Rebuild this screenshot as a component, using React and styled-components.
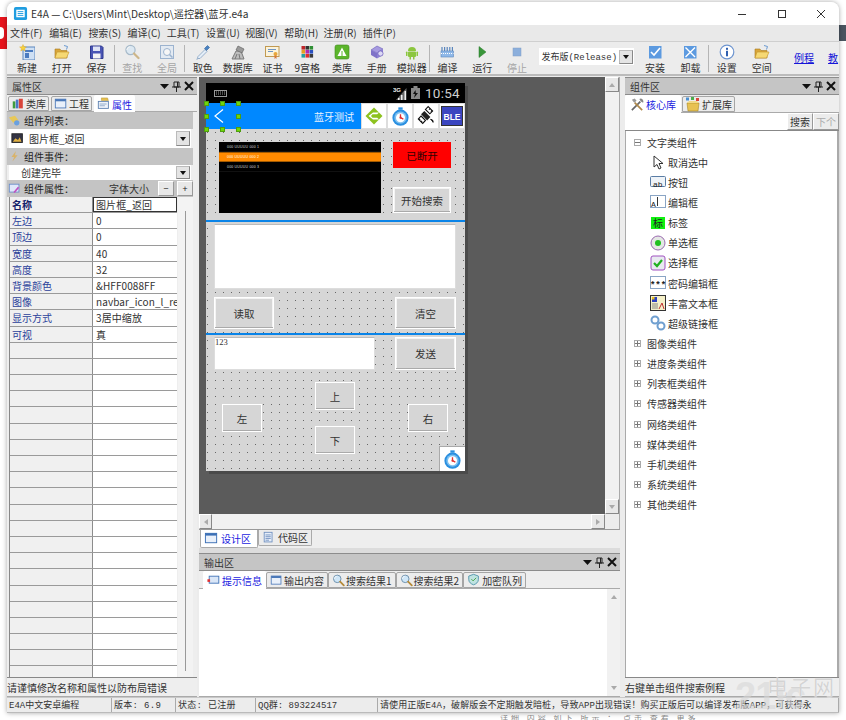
import React from "react";
import styled, { createGlobalStyle } from "styled-components";

const Global = createGlobalStyle`
  html, body { margin: 0; padding: 0; width: 846px; height: 720px; overflow: hidden; background: #fff; }
  * { box-sizing: border-box; }
  #root { font-family: "Noto Sans CJK SC", "Liberation Sans", sans-serif; font-size: 10px; color: #222; }
`;

const Page = styled.div`
  position: relative; width: 846px; height: 720px; padding: 2px 7px 7px 7px; background: #fff; overflow: hidden;
`;
const RedBlob = styled.div`
  position: absolute; left: 0; top: 17px; width: 7px; height: 32px; background: #e8141c;
  &::after { content: ""; position: absolute; left: 0; top: 10px; width: 4px; height: 12px; background: #fff; border-radius: 0 6px 6px 0; }
`;
const DarkEdge = styled.div`
  position: absolute; right: 0; top: 25px; width: 7px; height: 16px; background: #4a5560;
`;
const Win = styled.div`
  width: 832px; height: 711px; background: #f0f0f0; border-radius: 8px 8px 0 0; display: flex; flex-direction: column;
  box-shadow: 0 0 5px rgba(0,0,0,.35); overflow: hidden; position: relative;
`;
const TitleBar = styled.div`
  height: 23px; flex: none; background: #fff; display: flex; align-items: center; padding-left: 6px; gap: 3px;
  font-size: 10.2px; color: #333;
`;
const TitleText = styled.span` flex: 1; white-space: nowrap; `;
const WinBtns = styled.div` display: flex; color: #333; margin-right: -2px; `;
const WinBtn = styled.div` width: 39.5px; height: 23px; display: flex; align-items: center; justify-content: center; `;
const MenuBar = styled.div`
  height: 17px; flex: none; background: #e9e9e9; display: flex; align-items: center; padding: 0 0 2px 3px;
  border-bottom: 1px solid #cfcfcf;
`;
const MenuItem = styled.span` width: 39.2px; white-space: nowrap; font-size: 10px; color: #333; text-decoration: none; `;
const ToolBar = styled.div`
  height: 34px; flex: none; background: #ececec; display: flex; align-items: stretch; padding-left: 2.5px;
  border-bottom: 2px solid #bbb;
`;
const ToolBtn = styled.div`
  width: ${p => p.$w || 34.8}px; flex: none; display: flex; flex-direction: column; align-items: center; padding-top: 2px;
  font-size: 10px; line-height: 13px; white-space: nowrap; color: ${p => p.$off ? "#a5a5a5" : "#333"};
  & svg { display: block; margin-bottom: 1px; opacity: ${p => p.$off ? .55 : 1}; }
`;
const ToolSep = styled.div` width: 1px; flex: none; margin: 3px 0 2px; background: #b5b5b5; `;
const ComboBox = styled.div`
  width: 95px; height: 17px; margin: 6px 3px 0 5px; flex: none; background: #fff; display: flex; align-items: center; padding: 0 1px 0 2px;
  font-family: "Liberation Mono", "Noto Sans CJK SC", monospace; font-size: 9px; white-space: nowrap; color: #333;
`;
const ComboTxt = styled.span` flex: 1; overflow: hidden; `;
const ArrowBtn = styled.div`
  width: ${p => p.$w || 13}px; height: ${p => p.$h || 13}px; flex: none; background: #e4e4e4; border: 1px solid #bbb; border-right-color: #888; border-bottom-color: #888;
  display: flex; align-items: center; justify-content: center;
  &::after { content: ""; border-left: 3.5px solid transparent; border-right: 3.5px solid transparent; border-top: 4px solid #111; }
`;
const LinkBtn = styled.a`
  font-size: 10px; color: #1515d8; text-decoration: underline; white-space: nowrap; margin-top: 8px; margin-left: ${p => p.$ml || 0}px; width: ${p => p.$w}px; flex: none;
`;
const Workspace = styled.div` flex: 1; min-height: 0; display: flex; background: #ececec; padding-top: 1px; `;
const SidePanel = styled.div`
  width: ${p => p.$w}px; flex: none; display: flex; flex-direction: column; background: #eee;
`;
const PanelHead = styled.div`
  height: 18px; flex: none; background: #c5c5c5; border-top: 1px solid #8c8c8c; border-bottom: 1px solid #8c8c8c;
  display: flex; align-items: center; padding: 0 3px 0 5px; font-size: 10px; color: #333;
`;
const HeadTitle = styled.span` flex: 1; `;
const HeadGlyphs = styled.span` display: flex; align-items: center; gap: 3px; color: #111; `;
const TabRow = styled.div`
  height: ${p => p.$h || 18}px; flex: none; display: flex; align-items: flex-end; padding-left: ${p => p.$pad ?? 1}px; gap: ${p => p.$gap ?? 1}px; background: #eee;
  border-bottom: 1px solid #aaa;
`;
const Tab = styled.div`
  height: ${p => p.$active ? "calc(100% + 1px)" : "calc(100% - 1px)"}; display: flex; align-items: center; gap: 1px; padding: 0 ${p => p.$px ?? 2}px;
  white-space: nowrap; font-size: 10px; margin-bottom: ${p => p.$active ? "-1px" : "0"};
  color: ${p => p.$active ? "#1a1ae0" : "#333"}; background: ${p => p.$active ? "#fff" : "#ececec"};
  border: 1px solid #a5a5a5; border-bottom: ${p => p.$active ? "none" : "1px solid #a5a5a5"}; ${p => p.$active ? "border-color: transparent;" : ""}
  border-radius: 2px 2px 0 0;
`;
const SectionBar = styled.div`
  height: ${p => p.$h || 17}px; flex: none; margin-right: 4px; background: #c4c4c4; display: flex; align-items: center; gap: 2px; padding-left: 1px;
  font-size: 10px; color: #222; white-space: nowrap;
`;
const SectionTitle = styled.span` flex: 1; `;
const FontLabel = styled.span` margin-right: 6px; color: #333; `;
const MiniBtn = styled.div`
  width: 16px; height: 15px; background: #e8e8e8; border: 1px solid #fff; border-right-color: #999; border-bottom-color: #999;
  display: flex; align-items: center; justify-content: center; font-size: 9px; line-height: 1; margin-left: 1px;
`;
const SelectRow = styled.div`
  height: ${p => p.$h}px; flex: none; margin: ${p => p.$m || "0 6px 0 2px"}; background: #fff; display: flex; align-items: center; gap: 4px; padding: 0 1px 0 ${p => p.$pl || 2}px;
  font-size: 10px; color: #333;
`;
const SelTxt = styled.span` flex: 1; `;
const PropWrap = styled.div` flex: 1; min-height: 0; display: flex; padding-left: 2px; border-left: 0; background: #eee; overflow: hidden; `;
const PropTable = styled.div`
  width: 168px; flex: none; border-left: 1px solid #888; overflow: hidden;
`;
const PropRow = styled.div`
  height: 16.2px; display: flex; border-bottom: 1px solid #9a9a9a; border-top: 0;
`;
const PropName = styled.div`
  width: 83px; flex: none; background: #f0f0f0; border-right: 1px solid #8c8c8c; padding-left: 2px; line-height: 15px; font-size: 10px;
  color: ${p => p.$bold ? "#15206a" : "#2a3f9a"}; font-weight: ${p => p.$bold ? 700 : 400};
`;
const PropVal = styled.div`
  flex: 1; background: #fff; padding-left: 3px; line-height: 15px; font-size: 10px; color: #333; white-space: nowrap; overflow: hidden; letter-spacing: .1px;
  ${p => p.$edit ? "outline: 1px solid #333; outline-offset: -1px;" : ""}
`;
const PropScroll = styled.div`
  width: 15px; margin-left: 1px; flex: none; background: #f3f3f3; position: relative;
  &::after { content: ""; position: absolute; left: 7px; top: 14px; bottom: 6px; width: 1px; background: #999; }
`;
const Footer = styled.div`
  height: 20px; flex: none; background: #eee; border-top: 1px solid #888; border-bottom: 1px solid #aaa; padding-left: 0; line-height: 19px; font-size: 10px; color: #333; white-space: nowrap; overflow: hidden;
`;
const Center = styled.div` width: 421px; flex: none; margin: 0 5px 0 2px; display: flex; flex-direction: column; `;
const DesignBox = styled.div` height: 453px; flex: none; display: grid; grid-template-columns: 1fr 14px; grid-template-rows: 1fr 15px; border-bottom: 1px solid #999; border-right: 1px solid #aaa; `;
const DesignArea = styled.div` position: relative; background: #5b5b5b; overflow: hidden; `;
const VScroll = styled.div` background: #f1f1f1; display: flex; flex-direction: column; justify-content: space-between; `;
const HScroll = styled.div` background: #f1f1f1; display: flex; justify-content: space-between; `;
const Corner = styled.div` background: #ececec; `;
const ScrollBtn = styled.div`
  width: ${p => p.$w}px; height: ${p => p.$h}px; flex: none; background: #e8e8e8; border: 1px solid #fff; border-right-color: #888; border-bottom-color: #888;
  display: flex; align-items: center; justify-content: center;
  &::after { content: ""; ${p => ({
    up: "border-left:3px solid transparent;border-right:3px solid transparent;border-bottom:4px solid #aaa;",
    down: "border-left:3px solid transparent;border-right:3px solid transparent;border-top:4px solid #aaa;",
    left: "border-top:3px solid transparent;border-bottom:3px solid transparent;border-right:4px solid #aaa;",
    right: "border-top:3px solid transparent;border-bottom:3px solid transparent;border-left:4px solid #aaa;",
  })[p.$dir]} }
`;
const DocTabs = styled.div` height: 18px; flex: none; display: flex; align-items: flex-start; gap: 0; padding-left: 1px; background: #eee; `;
const DocTab = styled.div`
  height: ${p => p.$active ? 18 : 16}px; display: flex; align-items: center; gap: 2px; padding: 0 ${p => p.$active ? 6 : 3}px 0 3px; background: ${p => p.$active ? "#fff" : "#ececec"};
  color: ${p => p.$active ? "#1a1ae0" : "#333"}; border: 1px solid #aaa; border-top: 0; border-radius: 0 0 2px 2px; white-space: nowrap; font-size: 10px;
`;
const Gap = styled.div` height: 5px; flex: none; background: #dcdcdc; `;
const OutBody = styled.div` flex: 1; min-height: 0; background: #fff; display: flex; justify-content: flex-end; border-bottom: 1px solid #aaa; `;
const OutScroll = styled.div` width: 13px; background: #f1f1f1; display: flex; flex-direction: column; justify-content: space-between; padding: 6px 3px; align-items: center;
  &::before { content: ""; border-left:3px solid transparent;border-right:3px solid transparent;border-bottom:4px solid #aaa; }
  &::after { content: ""; border-left:3px solid transparent;border-right:3px solid transparent;border-top:4px solid #aaa; }
`;
const SearchRow = styled.div` height: 18px; flex: none; background: #fff; display: flex; justify-content: flex-end; border-bottom: 1px solid #888; `;
const SearchBtn = styled.div`
  width: ${p => p.$w}px; background: #ececec; border: 1px solid #fff; border-right-color: #999; border-bottom-color: #999; text-align: center; line-height: 15px; font-size: 10px;
  color: ${p => p.$off ? "#aaa" : "#333"};
`;
const Tree = styled.div` flex: 1; min-height: 0; background: #fff; padding-top: 1px; overflow: hidden; border-left: 1px solid #aaa; border-right: 2px solid #aaa; `;
const TreeRow = styled.div`
  height: 20.15px; display: flex; align-items: center; padding-left: ${p => p.$pl}px; gap: ${p => p.$gap}px; white-space: nowrap; font-size: 10px; color: #333;
`;
const Expander = styled.span`
  width: 7px; height: 7px; border: 1px solid #aaa; position: relative; flex: none; margin-right: 0;
  &::before { content: ""; position: absolute; left: 0; right: 0; top: 2px; height: 1px; background: #777; }
  ${p => p.$closed ? `&::after { content: ""; position: absolute; top: 0; bottom: 0; left: 2px; width: 1px; background: #777; }` : ""}
`;
const StatusBar = styled.div`
  height: 16px; flex: none; display: flex; background: #ececec; border-top: 1px solid #c8c8c8; border-bottom: 1px solid #bbb;
  font-family: "Liberation Mono", "Noto Sans CJK SC", monospace; font-size: 9px; color: #333; white-space: nowrap;
`;
const StatusCell = styled.div`
  width: ${p => p.$w}px; ${p => p.$grow ? "flex: 1; min-width: 0;" : "flex: none;"} overflow: hidden; padding-left: 2px; line-height: 16px; border-right: 1px solid #aaa; letter-spacing: ${p => p.$ls || 0};
`;
const Watermark = styled.div`
  position: absolute; left: 735px; top: 674px; width: 110px; height: 44px; pointer-events: none;
`;
const WmLogo = styled.span`
  position: absolute; left: 0; top: 2px; font-family: "Liberation Sans", sans-serif; font-weight: 700; font-size: 38px; line-height: 40px; color: rgba(215,215,215,.6); letter-spacing: -1px;
`;
const WmName = styled.span`
  position: absolute; left: 32px; top: 0; font-size: 21px; line-height: 24px; letter-spacing: 2px; color: rgba(205,205,205,.85); text-shadow: 0 0 1px rgba(255,255,255,.9);
`;
const BelowText = styled.div`
  position: absolute; left: 500px; bottom: 0; height: 5px; width: 340px; overflow: hidden; color: #888; font-size: 8px; line-height: 5px; letter-spacing: 3px; white-space: nowrap;
`;

/* phone in the designer: the free canvas of a form editor */
const Phone = styled.div`
  position: absolute; left: 7px; top: 6px; width: 259px; height: 388px; box-shadow: 3px 3px 0 #4a4a4a; background-color: #d6d6d6;
  background-image: radial-gradient(circle at 1.5px 1.5px, #666 .7px, transparent 1px); background-size: 8px 8px;
`;
const PhoneStatus = styled.div`
  height: 20px; background: #000; display: flex; align-items: center; padding: 0 5px 0 8px; color: #ddd; gap: 4px;
`;
const KeyPad = styled.span` flex: 1; display: flex; `;
const Clock = styled.span` font-family: Roboto, "Liberation Sans", sans-serif; font-size: 13.5px; letter-spacing: .3px; margin-left: 1px; color: #cfcfcf; `;
const NavBar = styled.div`
  height: 26px; background: #0088ff; display: flex; align-items: center; color: #fff; position: relative;
`;
const NavTitle = styled.span` margin: 0 7px 0 auto; font-size: 10px; color: #e8f3ff; `;
const NavIcon = styled.div`
  width: 26px; height: 26px; background: #fff; border: 1px solid #ddd; display: flex; align-items: center; justify-content: center;
`;
const Back = styled.span` margin-left: 7px; display: flex; `;
const Handle = styled.span`
  position: absolute; left: ${p => p.$l}px; top: ${p => p.$t}px; width: 5px; height: 5px; background: #6fd60a; border: 1px solid #4f9e10;
`;
const Ctl = styled.div`
  position: absolute; left: ${p => p.$x}px; top: ${p => p.$y}px; width: ${p => p.$w}px; height: ${p => p.$h}px;
`;
const CtlBtn = styled(Ctl)`
  background: #d6d6d6; border: 1px solid #fff; box-shadow: inset 0 -1px 0 #aaa, inset 0 0 0 ${p => p.$thick ? 1 : 0}px #f4f4f4; display: flex; align-items: center; justify-content: center; font-size: 10.5px; color: #333;
`;
const RedBox = styled(Ctl)` background: #ff0000; display: flex; align-items: center; justify-content: center; color: #300; font-size: 10.5px; `;
const WhiteBox = styled(Ctl)` background: #fff; border: 1px solid #ddd; border-top: 1px solid #bbb; font-family: "Liberation Serif", serif; font-size: 8.5px; line-height: 9px; color: #333; padding-left: 0; `;
const BlueLine = styled(Ctl)` background: #0a84e8; `;
const ListBox = styled(Ctl)` background: #000; display: flex; flex-direction: column; `;
const ListRow = styled.div`
  height: 10px; flex: none; padding-left: 8px; font-family: "Liberation Sans", sans-serif; font-size: 3.5px; line-height: 10px; color: #ddd; letter-spacing: .2px;
  ${p => p.$on ? "background: #ff8a00; box-shadow: inset 0 1px #a35a00, inset 0 -1px #a35a00; color: #ffe;" : "border-bottom: 1px solid #111;"}
`;
const FloatIcon = styled(Ctl)` background: #fff; border: 1px solid #aaa; border-right: 0; border-bottom: 0; display: flex; align-items: center; justify-content: center; `;

const S = ({ s = 16, children, vb = "0 0 16 16" }) => (
  <svg width={s} height={s} viewBox={vb} fill="none">{children}</svg>
);

const Folder = ({ s }) => (
  <S s={s}>
    <path d="M10 1.5l3.5 1-1 3" stroke="#6b9ad0" strokeWidth="1" />
    <path d="M1 5h5l1 1.5h6V14H1z" fill="#d9a63a" stroke="#a87a20" strokeWidth=".6" />
    <path d="M3 8h12l-2.5 6H1z" fill="#f6d873" stroke="#c2962c" strokeWidth=".6" />
  </S>
);
const Glass = ({ s }) => (
  <S s={s}>
    <circle cx="6.5" cy="6" r="4.6" fill="#cfe6f7" stroke="#6d90ad" strokeWidth="1.2" />
    <path d="M2.8 6a3.6 3.6 0 0 1 3-3.3" stroke="#fff" />
    <path d="M10 9.5l4.5 4.5" stroke="#b58a3a" strokeWidth="2.2" strokeLinecap="round" />
  </S>
);
const Stopwatch = ({ s = 18 }) => (
  <S s={s}>
    <rect x="6.2" y=".3" width="3.6" height="2" fill="#2a8fe0" />
    <circle cx="8" cy="9" r="6.8" fill="#2a8fe0" />
    <circle cx="8" cy="9" r="5.2" fill="#7cc0f0" />
    <circle cx="8" cy="9" r="3.8" fill="#fff" />
    <path d="M8 9V6.200M8 9l2.400 1.200" stroke="#e03030" strokeWidth="1.100" />
    <circle cx="8" cy="9" r=".9" fill="#e03030" />
  </S>
);
const TabCard = ({ c = "#4a78b8", s = 14 }) => (
  <S s={s}>
    <rect x="1.5" y="2.5" width="12" height="10" fill="#e9f0fa" stroke={c} />
    <rect x="1.5" y="2.5" width="12" height="2.4" fill={c} />
  </S>
);

const TI = 16;
const icons = {
  new: <S s={TI}><rect x="4" y="3" width="12" height="13" fill="#cfe0f4" stroke="#5a86bd" /><rect x="6" y="6" width="8" height="2" fill="#4a7bc0" /><rect x="6" y="9" width="4" height="5" fill="#4a7bc0" /><path d="M4 .5l1 2.3 2.4.2-1.8 1.6.6 2.4L4 5.7 1.800 7l.6-2.400L.6 3l2.400-.2z" fill="#f7d23e" stroke="#d8a520" strokeWidth=".4" /></S>,
  open: <Folder s={TI} />,
  save: <S s={TI}><path d="M2.500 2h11l1.500 1.500V14.500h-12.500z" fill="#4a55b5" stroke="#2f3a8f" /><rect x="5" y="2.500" width="7" height="4.500" fill="#dfe4f5" /><rect x="5" y="9.500" width="7.500" height="5" fill="#f4f4f4" /></S>,
  find: <Glass s={TI} />,
  global: <S s={TI}><rect x="1.500" y="1.500" width="13" height="13" fill="#dce9f7" stroke="#5c86b8" /><circle cx="8" cy="8" r="3.500" fill="#fff" stroke="#5c86b8" /><path d="M10.500 10.500l3 3" stroke="#5c86b8" strokeWidth="1.500" /></S>,
  dropper: <S s={TI}><path d="M3 14.500l-1 1 1-3 7-7 2 2-7 7z" fill="#e4eef8" stroke="#85a1c2" strokeWidth=".8" /><path d="M9.500 4.500l3-3 2 2-3 3z" fill="#4a82c2" stroke="#2d5f9a" strokeWidth=".6" /></S>,
  db: <S s={TI}><path d="M2 15l4-8h5l3 8z" fill="#bdbdbd" stroke="#7a7a7a" /><path d="M8 2l6 3-2 4-6-3z" fill="#9a9a9a" stroke="#666" strokeWidth=".7" /><path d="M5 15l2-5" stroke="#777" /><path d="M10 15l-1-5" stroke="#777" /></S>,
  cert: <S s={TI}><rect x="1.500" y="2.500" width="13.500" height="10" fill="#fbf3dc" stroke="#c19a52" /><path d="M4 5.500h8M4 7.500h5" stroke="#6f95c4" /><circle cx="11.500" cy="10" r="2" fill="#e8a63a" /><path d="M10.500 11.500v3.500l1-1 1 1v-3.500" fill="#d8763a" /></S>,
  grid: <S s={TI}>{["#c0262a","#333","#2f8f35","#e6a020","#b02ab0","#2a50c0","#25a0a0","#e03030","#3a3a3a"].map((c, i) => <rect key={i} x={2.500 + (i % 3) * 4} y={2 + Math.floor(i / 3) * 4} width="3.600" height="3.600" fill={c} />)}</S>,
  lib: <S s={TI}><rect x="1" y="1" width="14" height="14" rx="2" fill="#5cb52c" stroke="#3f8a1c" strokeWidth=".6" /><path d="M8 3.500L12.500 12h-9z" fill="#fff" /><path d="M8 7v5" stroke="#5cb52c" /></S>,
  manual: <S s={TI}><path d="M2 6l6-4 6 3-6 4z" fill="#a69ae0" stroke="#6a5cb8" strokeWidth=".6" /><path d="M2 6v5l6 3.500V9z" fill="#7f72c8" /><path d="M8 9v5.500l6-3.500V5z" fill="#8c80d4" /><circle cx="11.500" cy="9.500" r="2.600" fill="#dcd8f5" stroke="#6a5cb8" strokeWidth=".7" /></S>,
  android: <S s={TI}><path d="M4 7a4 4 0 0 1 8 0z" fill="#8cc63f" /><rect x="4" y="7.600" width="8" height="5.500" rx="1" fill="#8cc63f" /><rect x="2" y="7.600" width="1.500" height="4.500" rx=".7" fill="#8cc63f" /><rect x="12.500" y="7.600" width="1.500" height="4.500" rx=".7" fill="#8cc63f" /><rect x="5.500" y="12.500" width="1.500" height="3" fill="#8cc63f" /><rect x="9" y="12.500" width="1.500" height="3" fill="#8cc63f" /></S>,
  build: <S s={TI}><rect x="2" y="7" width="12.500" height="6" fill="#8fb8e8" stroke="#5a86bd" strokeWidth=".6" /><path d="M3 3v4M5.600 3v4M8.200 3v4M10.800 3v4M13.400 3v4" stroke="#5a86bd" strokeWidth="1.200" /><path d="M2 9.500h12.500" stroke="#fff" strokeDasharray="1 1" /></S>,
  run: <S s={TI}><path d="M5 2.500l7 5.500-7 5.500z" fill="#39963a" stroke="#2a7a2c" strokeWidth=".5" /></S>,
  stop: <S s={TI}><rect x="4" y="4" width="8" height="8" fill="#3f7fd0" stroke="#2d62a8" strokeWidth=".5" /></S>,
  install: <S s={TI}><rect x="2" y="2" width="12.500" height="12.500" fill="#5c9ae0" /><path d="M4 8l3 3 6-7" stroke="#fff" strokeWidth="1.600" /></S>,
  remove: <S s={TI}><rect x="2" y="2" width="12.500" height="12.500" fill="#5c9ae0" /><path d="M3.500 3.500l9.500 9.500M13 3.500l-9.500 9.500" stroke="#fff" strokeWidth="1.400" /></S>,
  info: <S s={TI}><circle cx="8" cy="8" r="6.800" fill="#fff" stroke="#6e95d0" strokeWidth="1.200" /><rect x="7" y="6.800" width="2" height="5.500" fill="#2f5fb0" /><rect x="7" y="3.800" width="2" height="2" fill="#2f5fb0" /></S>,
};

const TabLib = () => <S s={14}><rect x="2" y="5" width="3" height="8" fill="#3f9c3f" /><rect x="5.500" y="3" width="3" height="10" fill="#4a78c8" /><rect x="9" y="2" width="4.500" height="11" fill="#d9453a" /></S>;
const TabAttr = () => <S s={14}><rect x="1.500" y="5" width="11.500" height="8" fill="#eef3fa" stroke="#5b7fb0" /><path d="M3 8h8M3 10h6" stroke="#8aa5c8" /><path d="M5 1h7l1 3H5z" fill="#e6c050" stroke="#a98926" strokeWidth=".5" /></S>;
const Tools = () => <S s={15}><path d="M2 14L11 5" stroke="#666" strokeWidth="1.800" /><path d="M10 2a3 3 0 0 1 4 4l-2-1-1-1z" fill="#888" /><path d="M13 14L5 6" stroke="#b0894a" strokeWidth="1.800" /><path d="M2 3l3-1.500L7 4 4.500 6z" fill="#999" /></S>;
const Boxes = () => <S s={16}><path d="M2 7h12l-1 8H3z" fill="#e8c252" stroke="#a98926" strokeWidth=".6" /><path d="M2 7l2-2h8l2 2" fill="#f2d987" /><rect x="1" y="1.500" width="3" height="3" fill="#4a8fd0" /><rect x="6" y="1" width="3" height="3" fill="#4cae4c" /><rect x="11" y="2" width="3" height="3" fill="#d9453a" /></S>;

const HeadIcons = () => (
  <HeadGlyphs>
    <svg width="9" height="6" viewBox="0 0 9 6"><path d="M0 1h9L4.500 6z" fill="#111" /></svg>
    <svg width="9" height="11" viewBox="0 0 9 11"><path d="M2 1h5v5H2zM0 6h9M4.500 6v5M5.500 1v5" stroke="#222" fill="none" /></svg>
    <svg width="10" height="10" viewBox="0 0 10 10"><path d="M1 1l8 8M9 1l-8 8" stroke="#111" strokeWidth="2" /></svg>
  </HeadGlyphs>
);

const ToolB = ({ icon, label, off, w }) => <ToolBtn $off={off} $w={w}>{icons[icon]}{label}</ToolBtn>;

const rows = [
  ["名称", "图片框_返回", 1], ["左边", "0"], ["顶边", "0"], ["宽度", "40"], ["高度", "32"], ["背景颜色", "&HFF0088FF"],
  ["图像", "navbar_icon_l_ret"], ["显示方式", "3居中缩放"], ["可视", "真"],
  ...Array.from({ length: 21 }, () => ["", ""]),
];

const Child = ({ icon, children }) => <TreeRow $pl={24} $gap={2}>{icon}<span>{children}</span></TreeRow>;
const Group = ({ closed, children }) => <TreeRow $pl={8} $gap={6}><Expander $closed={closed} /><span>{children}</span></TreeRow>;
const boxTxt = (t, x = 1) => <text x={x} y="11.500" fontSize="8" fontFamily="Liberation Mono, monospace" fill="#222">{t}</text>;
const handles = [[-2, -2], [14, -2], [30, -2], [-2, 11], [30, 11], [-2, 24], [14, 24], [30, 24]];

export default function App() {
  return (
    <Page>
      <Global />
      <RedBlob />
      <DarkEdge />
      <Win>
        <TitleBar>
          <S s={15}><rect x="1" y="1" width="14" height="14" rx="2" fill="#1f9de0" /><rect x="3.500" y="4" width="9" height="8" fill="#fff" /><path d="M5 6h6M5 8h6M5 10h6" stroke="#1f9de0" /></S>
          <TitleText>E4A — C:\Users\Mint\Desktop\遥控器\蓝牙.e4a</TitleText>
          <WinBtns>
            <WinBtn><svg width="10" height="10" viewBox="0 0 10 10"><path d="M1 5.500h8" stroke="#333" /></svg></WinBtn>
            <WinBtn><svg width="10" height="10" viewBox="0 0 10 10"><rect x="1.500" y="1.500" width="7" height="7" stroke="#333" fill="none" /></svg></WinBtn>
            <WinBtn><svg width="10" height="10" viewBox="0 0 10 10"><path d="M1 1l8 8M9 1l-8 8" stroke="#333" /></svg></WinBtn>
          </WinBtns>
        </TitleBar>
        <MenuBar>
          {["文件(F)", "编辑(E)", "搜索(S)", "编译(C)", "工具(T)", "设置(U)", "视图(V)", "帮助(H)", "注册(R)", "插件(P)"].map(m => <MenuItem key={m}>{m}</MenuItem>)}
        </MenuBar>
        <ToolBar>
          <ToolB icon="new" label="新建" /><ToolB icon="open" label="打开" /><ToolB icon="save" label="保存" />
          <ToolSep />
          <ToolB icon="find" label="查找" off /><ToolB icon="global" label="全局" off />
          <ToolSep />
          <ToolB icon="dropper" label="取色" /><ToolB icon="db" label="数据库" /><ToolB icon="cert" label="证书" /><ToolB icon="grid" label="9宫格" /><ToolB icon="lib" label="类库" /><ToolB icon="manual" label="手册" /><ToolB icon="android" label="模拟器" />
          <ToolSep />
          <ToolB icon="build" label="编译" /><ToolB icon="run" label="运行" /><ToolB icon="stop" label="停止" off />
          <ComboBox><ComboTxt>发布版(Release)</ComboTxt><ArrowBtn $w={14} $h={14} /></ComboBox>
          <ToolB icon="install" label="安装" w={35} /><ToolB icon="remove" label="卸载" w={36} />
          <ToolSep />
          <ToolB icon="info" label="设置" /><ToolB icon="open" label="空间" />
          <LinkBtn $w={34} $ml={15}>例程</LinkBtn>
          <LinkBtn $w={10}>教</LinkBtn>
        </ToolBar>
        <Workspace>
          <SidePanel $w={190}>
            <PanelHead><HeadTitle>属性区</HeadTitle><HeadIcons /></PanelHead>
            <TabRow $h={17} $pad={1} $gap={2}>
              <Tab><TabLib />类库</Tab>
              <Tab><TabCard />工程</Tab>
              <Tab $active><TabAttr />属性</Tab>
            </TabRow>
            <SectionBar>
              <S s={14}><path d="M1 4l7-2 4 5-6 3z" fill="#e8c858" /><circle cx="10" cy="10" r="3" fill="#6aa0e0" /></S>
              <SectionTitle>组件列表：</SectionTitle>
            </SectionBar>
            <SelectRow $h={19}>
              <S s={14}><rect x="1" y="2" width="12" height="10" fill="#334" stroke="#222" /><path d="M2 11l3-4 3 2 2-3 2 5z" fill="#e0b040" /></S>
              <SelTxt>图片框_返回</SelTxt><ArrowBtn $w={14} $h={15} />
            </SelectRow>
            <SectionBar $h={17}>
              <S s={14}><path d="M9 1L4 8h3l-2 5 6-7H8z" fill="#d9b36a" /></S>
              <SectionTitle>组件事件：</SectionTitle>
            </SectionBar>
            <SelectRow $h={15} $pl={12}><SelTxt>创建完毕</SelTxt><ArrowBtn $w={14} $h={13} /></SelectRow>
            <SectionBar $h={17}>
              <S s={14}><rect x="1.500" y="2.500" width="11" height="9" fill="#dfe8fa" stroke="#6a8cc8" /><path d="M7 12l5-6" stroke="#c050c0" strokeWidth="2" /></S>
              <SectionTitle>组件属性：</SectionTitle>
              <FontLabel>字体大小</FontLabel>
              <MiniBtn>−</MiniBtn><MiniBtn>+</MiniBtn>
            </SectionBar>
            <PropWrap>
              <PropTable>
                {rows.map((r, i) => (
                  <PropRow key={i}>
                    <PropName $bold={r[2]}>{r[0]}</PropName>
                    <PropVal $edit={r[2]}>{r[1]}</PropVal>
                  </PropRow>
                ))}
              </PropTable>
              <PropScroll />
            </PropWrap>
            <Footer>请谨慎修改名称和属性以防布局错误</Footer>
          </SidePanel>
          <Center>
            <DesignBox>
              <DesignArea>
                <Phone>
                  <PhoneStatus>
                    <KeyPad><svg width="13" height="7" viewBox="0 0 13 7"><rect x=".5" y=".5" width="12" height="6" fill="none" stroke="#999" /><path d="M2 2h9M2 4h9" stroke="#999" strokeDasharray="1 1" /></svg></KeyPad>
                    <svg width="14" height="15" viewBox="0 0 14 15"><path d="M13.500 2v12H3z" fill="#666" /><path d="M8 14V9h1.500v5zM11.500 14V5h1.500v9zM5 14v-2h1.500v2z" fill="#eee" /><text x="0" y="6" fontSize="6" fontWeight="700" fill="#eee" fontFamily="Liberation Sans">3G</text></svg>
                    <svg width="9" height="14" viewBox="0 0 9 14"><rect x="2.500" y="0" width="4" height="2" fill="#888" /><rect x="0" y="2" width="9" height="11" fill="#888" /><path d="M4.500 4L2 8h2l-1 4 4-5H4.800z" fill="#111" /></svg>
                    <Clock>10:54</Clock>
                  </PhoneStatus>
                  <NavBar>
                    <Back><svg width="12" height="16" viewBox="0 0 12 16"><path d="M10 1.500L2 8l8 6.500" stroke="#fff" strokeWidth="1.200" fill="none" /></svg></Back>
                    {handles.map(([l, t], i) => <Handle key={i} $l={l} $t={t} />)}
                    <NavTitle>蓝牙测试</NavTitle>
                    <NavIcon><svg width="20" height="20" viewBox="0 0 20 20"><path d="M10 1.500L18.500 10 10 18.500 1.500 10z" fill="#8dc21f" /><path d="M9 6.500h6l-1.800 1.800H8.500L7 10l1.500 1.700h4.700L15 13.500H9L4.500 10z" fill="#fff" /></svg></NavIcon>
                    <NavIcon><Stopwatch s={19} /></NavIcon>
                    <NavIcon><svg width="22" height="22" viewBox="0 0 20 20"><g stroke="#111" fill="#fff" strokeWidth="1"><path d="M12 1.500l4 4-2.500 2.500-4-4z" /><path d="M15.500 5l-1 1M13.700 3.200l-1 1" /><path d="M5.500 10l4 4-2.500 2.800-4-4z" /><path d="M6.500 15.500l-1-1M4.700 13.700l-1-1" /></g><path d="M8.500 5.500l5.500 5.500-3 3-5.500-5.500z" fill="#222" /><path d="M14 13a3 3 0 0 1 2.500 3" stroke="#111" /></svg></NavIcon>
                    <NavIcon>
                      <svg width="22" height="20" viewBox="0 0 22 20"><rect x=".5" y=".5" width="21" height="19" fill="#3b46c0" stroke="#333" /><text x="11" y="13.500" textAnchor="middle" fontSize="8.500" fontWeight="700" fontFamily="Liberation Sans, sans-serif" fill="#fff">BLE</text></svg>
                    </NavIcon>
                  </NavBar>
                  <ListBox $x={13} $y={59} $w={162} $h={71}>
                    <ListRow>000 UUUUU 000 1</ListRow>
                    <ListRow $on>000 UUUUU 000 2</ListRow>
                    <ListRow>000 UUUUU 000 3</ListRow>
                  </ListBox>
                  <RedBox $x={187} $y={59} $w={58} $h={26}>已断开</RedBox>
                  <CtlBtn $x={187} $y={104} $w={58} $h={26} $thick>开始搜索</CtlBtn>
                  <BlueLine $x={0} $y={137} $w={259} $h={2} />
                  <WhiteBox $x={8} $y={141} $w={242} $h={65} />
                  <CtlBtn $x={8} $y={214} $w={60} $h={32} $thick>读取</CtlBtn>
                  <CtlBtn $x={189} $y={214} $w={61} $h={32} $thick>清空</CtlBtn>
                  <BlueLine $x={0} $y={250} $w={259} $h={2} />
                  <WhiteBox $x={8} $y={254} $w={161} $h={33}>123</WhiteBox>
                  <CtlBtn $x={189} $y={254} $w={61} $h={33} $thick>发送</CtlBtn>
                  <CtlBtn $x={109} $y={299} $w={40} $h={28}>上</CtlBtn>
                  <CtlBtn $x={16} $y={321} $w={40} $h={28}>左</CtlBtn>
                  <CtlBtn $x={202} $y={321} $w={40} $h={28}>右</CtlBtn>
                  <CtlBtn $x={109} $y={343} $w={40} $h={28}>下</CtlBtn>
                  <FloatIcon $x={233} $y={363} $w={26} $h={25}><Stopwatch s={19} /></FloatIcon>
                </Phone>
              </DesignArea>
              <VScroll><ScrollBtn $w={14} $h={15} $dir="up" /><ScrollBtn $w={14} $h={15} $dir="down" /></VScroll>
              <HScroll><ScrollBtn $w={13} $h={15} $dir="left" /><ScrollBtn $w={14} $h={15} $dir="right" /></HScroll>
              <Corner />
            </DesignBox>
            <DocTabs>
              <DocTab $active><TabCard c="#3b6fb5" s={15} />设计区</DocTab>
              <DocTab>
                <S s={14}><rect x="2.500" y="1.500" width="9" height="11" fill="#e6eef9" stroke="#6f8fbf" /><path d="M4 4.500h6M4 6.500h6M4 8.500h6M4 10.500h4" stroke="#6f8fbf" /></S>
                代码区
              </DocTab>
            </DocTabs>
            <Gap />
            <PanelHead><HeadTitle>输出区</HeadTitle><HeadIcons /></PanelHead>
            <TabRow $h={18} $pad={4} $gap={0}>
              <Tab $active $px={3}><S s={14}><rect x="2.500" y="2.500" width="11" height="8" fill="#d9e6f7" stroke="#3b6fb5" /><rect x=".5" y="6" width="3" height="3" fill="#e03030" /></S>提示信息</Tab>
              <Tab $px={3}><TabCard s={13} />输出内容</Tab>
              <Tab $px={3}><Glass s={13} />搜索结果1</Tab>
              <Tab $px={3}><Glass s={13} />搜索结果2</Tab>
              <Tab $px={3}><S s={14}><path d="M7.500 1.500l5.500 2v4c0 3-2.500 5-5.500 6-3-1-5.500-3-5.500-6v-4z" fill="#bfe3e0" stroke="#4a90a8" /><path d="M5 7l2 2 3.500-3.500" stroke="#3f9c3f" /></S>加密队列</Tab>
            </TabRow>
            <OutBody><OutScroll /></OutBody>
          </Center>
          <SidePanel $w={214}>
            <PanelHead><HeadTitle>组件区</HeadTitle><HeadIcons /></PanelHead>
            <TabRow $h={18} $pad={0}>
              <Tab $active $px={4}><Tools />核心库</Tab>
              <Tab><Boxes />扩展库</Tab>
            </TabRow>
            <SearchRow><SearchBtn $w={26}>搜索</SearchBtn><SearchBtn $w={26} $off>下个</SearchBtn></SearchRow>
            <Tree>
              <Group>文字类组件</Group>
              <TreeRow $pl={26} $gap={2}>
                <svg width="14" height="15" viewBox="0 0 14 15"><path d="M2 1v11l3-2.500 2 4.500 2-1-2-4.500h4z" fill="#fff" stroke="#333" /></svg>
                <span>取消选中</span>
              </TreeRow>
              <Child icon={<svg width="16" height="14" viewBox="0 0 16 14"><rect x=".5" y="1.500" width="15" height="10" rx="1" fill="#eef3f8" stroke="#5a7da5" />{boxTxt("ab", 3)}</svg>}>按钮</Child>
              <Child icon={<svg width="16" height="14" viewBox="0 0 16 14"><rect x=".5" y=".5" width="15" height="12" fill="#fff" stroke="#8aa5c5" />{boxTxt("A", 1)}<path d="M7.500 2v9" stroke="#333" /></svg>}>编辑框</Child>
              <Child icon={<S s={16}><rect x="1" y="2" width="14" height="12" fill="#10f010" /><text x="8" y="12" textAnchor="middle" fontSize="10" fill="#222" fontFamily="Noto Sans CJK SC">标</text></S>}>标签</Child>
              <Child icon={<S s={16}><circle cx="8" cy="8" r="7" fill="#e4e8e4" stroke="#9a6ab0" /><circle cx="8" cy="8" r="3" fill="#20c020" /></S>}>单选框</Child>
              <Child icon={<S s={16}><rect x="1" y="1" width="14" height="14" rx="2" fill="#e8eaf0" stroke="#a050c0" /><path d="M4 8l3 3 5-6" stroke="#20b020" strokeWidth="2.200" /></S>}>选择框</Child>
              <Child icon={<svg width="16" height="14" viewBox="0 0 16 14"><rect x=".5" y=".5" width="15" height="12" fill="#fff" stroke="#8aa5c5" /><text x="8" y="12" textAnchor="middle" fontSize="9" fontWeight="700" fontFamily="Liberation Mono, monospace" fill="#222">***</text></svg>}>密码编辑框</Child>
              <Child icon={<S s={16}><rect x=".5" y=".5" width="15" height="15" fill="#f5f0c8" stroke="#333" /><rect x="2" y="2" width="5" height="5" fill="#2a3fc0" /><rect x="2" y="2" width="2.500" height="2.500" fill="#e8c020" /><path d="M2 9h6M2 11h6M2 13h6" stroke="#888" /><path d="M9 14l3-6 2 6" stroke="#c03030" /></S>}>丰富文本框</Child>
              <Child icon={<S s={16}><circle cx="5" cy="5" r="3.500" stroke="#6f9fd0" strokeWidth="2" /><circle cx="11" cy="11" r="3.500" stroke="#6f9fd0" strokeWidth="2" /></S>}>超级链接框</Child>
              {["图像类组件", "进度条类组件", "列表框类组件", "传感器类组件", "网络类组件", "媒体类组件", "手机类组件", "系统类组件", "其他类组件"].map(g => <Group key={g} closed>{g}</Group>)}
            </Tree>
            <Footer>右键单击组件搜索例程</Footer>
          </SidePanel>
        </Workspace>
        <StatusBar>
          <StatusCell $w={105}>E4A中文安卓编程</StatusCell>
          <StatusCell $w={64} $ls=".3px">版本: 6.9</StatusCell>
          <StatusCell $w={80} $ls=".3px">状态: 已注册</StatusCell>
          <StatusCell $w={122}>QQ群: 893224517</StatusCell>
          <StatusCell $grow $ls=".1px">请使用正版E4A，破解版会不定期触发暗桩，导致APP出现错误！购买正版后可以编译发布版APP，可获得永</StatusCell>
        </StatusBar>
      </Win>
      <BelowText>详细 内容 如下 所示 ： 点击 查看 更多</BelowText>
      <Watermark>
        <WmLogo>21ic</WmLogo>
        <WmName>电子网</WmName>
      </Watermark>
    </Page>
  );
}
